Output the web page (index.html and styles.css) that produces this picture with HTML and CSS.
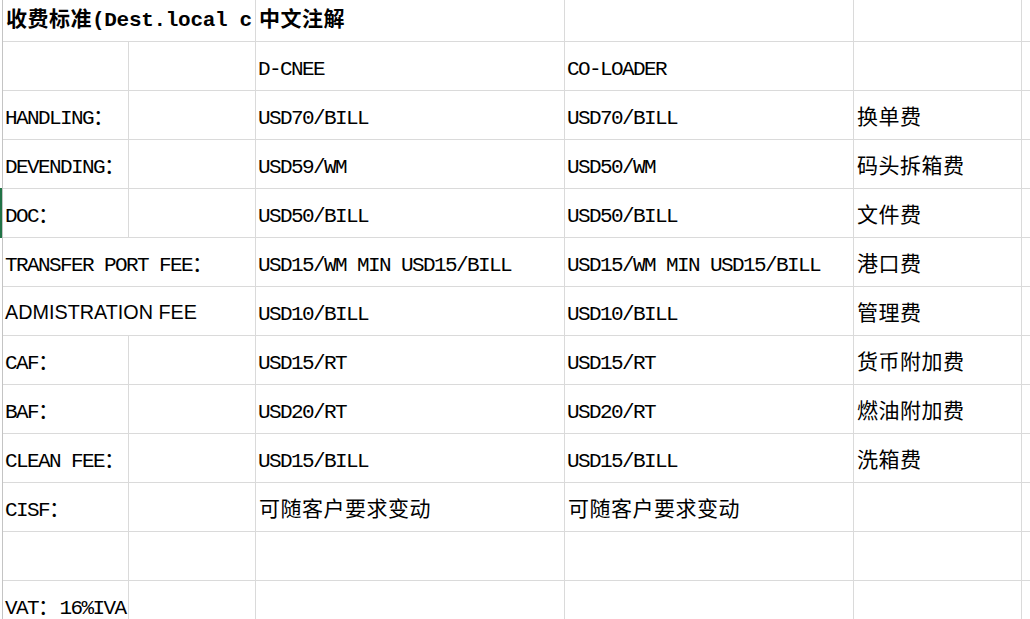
FILE: index.html
```html
<!DOCTYPE html>
<html lang="zh-CN">
<head>
<meta charset="utf-8">
<title>收费标准</title>
<link rel="stylesheet" href="styles.css">
</head>
<body>
<div class="sheet">
  <div class="c span2 head"><span class="zh">收费标准</span>(Dest.local c</div>
  <div class="c head"><span class="zh">中文注解</span></div>
  <div class="c"></div>
  <div class="c"></div>
  <div class="c last"></div>

  <div class="c"></div>
  <div class="c"></div>
  <div class="c">D-CNEE</div>
  <div class="c">CO-LOADER</div>
  <div class="c"></div>
  <div class="c last"></div>

  <div class="c">HANDLING<span class="zh">：</span></div>
  <div class="c"></div>
  <div class="c">USD70/BILL</div>
  <div class="c">USD70/BILL</div>
  <div class="c note"><span class="zh">换单费</span></div>
  <div class="c last"></div>

  <div class="c">DEVENDING<span class="zh">：</span></div>
  <div class="c"></div>
  <div class="c">USD59/WM</div>
  <div class="c">USD50/WM</div>
  <div class="c note"><span class="zh">码头拆箱费</span></div>
  <div class="c last"></div>

  <div class="c active">DOC<span class="zh">：</span></div>
  <div class="c"></div>
  <div class="c">USD50/BILL</div>
  <div class="c">USD50/BILL</div>
  <div class="c note"><span class="zh">文件费</span></div>
  <div class="c last"></div>

  <div class="c span2">TRANSFER PORT FEE<span class="zh">：</span></div>
  <div class="c">USD15/WM MIN USD15/BILL</div>
  <div class="c">USD15/WM MIN USD15/BILL</div>
  <div class="c note"><span class="zh">港口费</span></div>
  <div class="c last"></div>

  <div class="c span2"><span class="sans">ADMISTRATION FEE</span></div>
  <div class="c">USD10/BILL</div>
  <div class="c">USD10/BILL</div>
  <div class="c note"><span class="zh">管理费</span></div>
  <div class="c last"></div>

  <div class="c">CAF<span class="zh">：</span></div>
  <div class="c"></div>
  <div class="c">USD15/RT</div>
  <div class="c">USD15/RT</div>
  <div class="c note"><span class="zh">货币附加费</span></div>
  <div class="c last"></div>

  <div class="c">BAF<span class="zh">：</span></div>
  <div class="c"></div>
  <div class="c">USD20/RT</div>
  <div class="c">USD20/RT</div>
  <div class="c note"><span class="zh">燃油附加费</span></div>
  <div class="c last"></div>

  <div class="c">CLEAN FEE<span class="zh">：</span></div>
  <div class="c"></div>
  <div class="c">USD15/BILL</div>
  <div class="c">USD15/BILL</div>
  <div class="c note"><span class="zh">洗箱费</span></div>
  <div class="c last"></div>

  <div class="c">CISF<span class="zh">：</span></div>
  <div class="c"></div>
  <div class="c note"><span class="zh">可随客户要求变动</span></div>
  <div class="c note"><span class="zh">可随客户要求变动</span></div>
  <div class="c"></div>
  <div class="c last"></div>

  <div class="c"></div>
  <div class="c"></div>
  <div class="c"></div>
  <div class="c"></div>
  <div class="c"></div>
  <div class="c last"></div>

  <div class="c">VAT<span class="zh">：</span>16%IVA</div>
  <div class="c"></div>
  <div class="c"></div>
  <div class="c"></div>
  <div class="c"></div>
  <div class="c last"></div>
</div>
</body>
</html>
```

FILE: styles.css
```css
html, body {
  margin: 0;
  padding: 0;
  background: #ffffff;
  overflow: hidden;
}

.sheet {
  display: grid;
  grid-template-columns: 126px 127px 309px 289px 168px 1fr;
  grid-template-rows: 42px repeat(11, 49px) 49px;
  margin-left: 2px;
  border-left: 1px solid #c4c4c4;
  width: 1028px;
  height: 619px;
}

.c {
  box-sizing: border-box;
  border-right: 1px solid #dadada;
  border-bottom: 1px solid #dadada;
  padding: 17px 0 0 2px;
  font-family: "Liberation Mono", monospace;
  font-size: 21px;
  line-height: 21px;
  letter-spacing: -1.6px;
  color: #000;
  white-space: nowrap;
  overflow: hidden;
  position: relative;
}

.c.note {
  padding-left: 3px;
}

.c.last {
  border-right: none;
}

.c.span2 {
  grid-column: span 2;
}

.c.head {
  padding-top: 10px;
  padding-left: 3px;
  font-weight: bold;
  letter-spacing: -0.3px;
}

.c.active {
  overflow: visible;
}

.c.active::before {
  content: "";
  position: absolute;
  left: -3px;
  top: -1px;
  width: 2px;
  height: 50px;
  background: #217346;
}

.zh {
  font-family: "Noto Sans CJK SC", sans-serif;
  letter-spacing: 0.5px;
  line-height: 0;
}

.sans {
  font-family: "Liberation Sans", Arial, sans-serif;
  font-size: 19.8px;
  letter-spacing: 0;
  line-height: 0;
  vertical-align: 1px;
}
```
